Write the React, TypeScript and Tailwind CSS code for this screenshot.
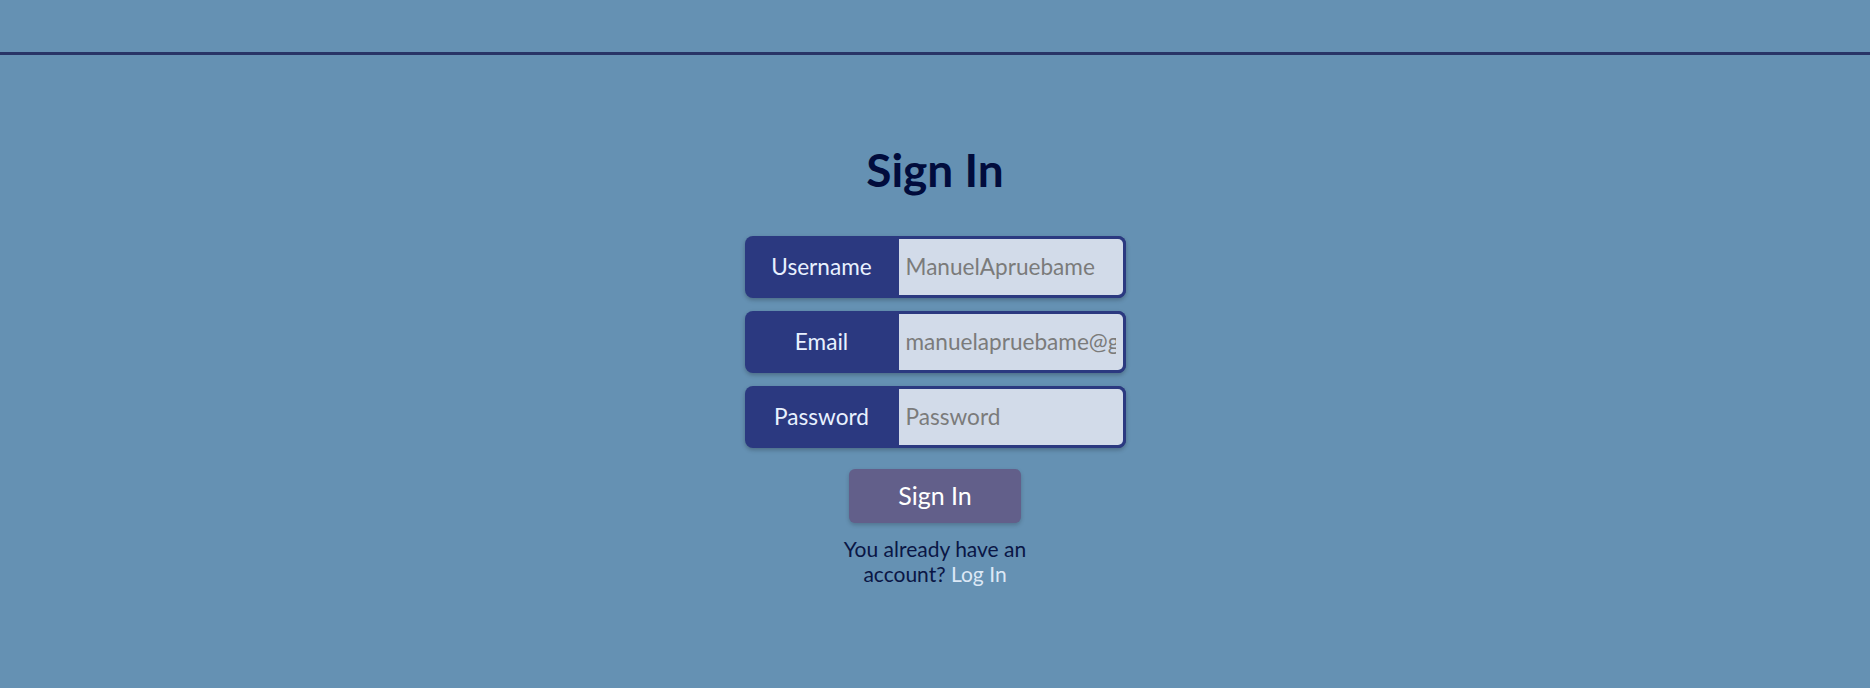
import React from 'react';

const Field = ({ label, placeholder, type = "text" }: { label: string, placeholder: string, type?: string }) => (
    <div className="flex h-[62px] w-[381px] rounded-lg bg-[#2b3980] shadow-[0_2px_4px_rgba(0,0,0,0.25)]">
        <span className="flex w-[154px] shrink-0 items-center justify-center text-[22.6px] text-[#e8f1ff]">{label}</span>
        <input
            type={type}
            placeholder={placeholder}
            className="min-w-0 flex-1 rounded-r-lg border-[3px] border-l-0 border-[#2b3980] bg-[#d2dbe9] px-[7px] text-[22.6px] text-[#1a1a1a] outline-none placeholder:text-[#7b7b7b]"
        />
    </div>
);

export default function App() {
    return (
        <div className="min-h-[688px] bg-[#6591b3] font-['Lato','Noto_Sans',sans-serif]">
            <header className="h-[55px] border-b-[3px] border-[#283466]"></header>

            <main className="flex flex-col items-center pt-[88px]">
                <h1 className="text-[46px] font-bold leading-[54px] text-[#010c3c]">Sign In</h1>

                <form className="mt-[39px] flex flex-col items-center gap-[13px]">
                    <Field label="Username" placeholder="ManuelApruebame" />
                    <Field label="Email" placeholder="manuelapruebame@gmail.com" type="email" />
                    <Field label="Password" placeholder="Password" type="password" />

                    <button
                        type="button"
                        className="mt-[8px] h-[54px] w-[172px] rounded-md bg-[#625f8a] text-[25px] text-white shadow-[0_2px_4px_rgba(0,0,0,0.2)]"
                    >
                        Sign In
                    </button>
                </form>

                <p className="mt-[13px] w-[205px] text-center text-[21px] leading-[25px] text-[#0a1645]">
                    You already have an account? <a className="text-[#dce8f6]">Log In</a>
                </p>
            </main>
        </div>
    );
}
